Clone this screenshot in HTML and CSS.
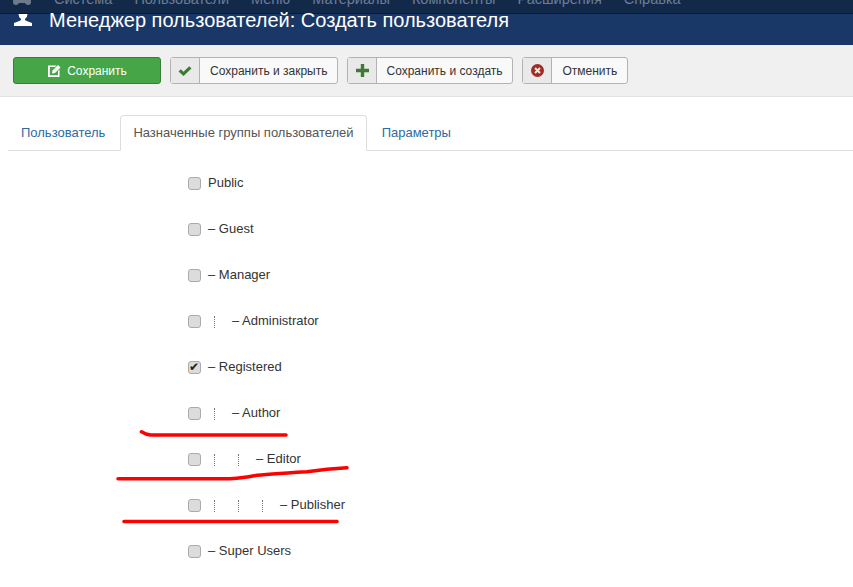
FILE: index.html
```html
<!DOCTYPE html>
<html lang="en">
<head>
    <meta charset="UTF-8">
    <meta name="viewport" content="width=device-width, initial-scale=1.0">
    <link rel="stylesheet" href="styles.css">
    <title>Менеджер пользователей: Создать пользователя</title>
</head>
<body>
    <nav class="navbar">
        <svg class="nav-logo" width="18" height="5" viewBox="0 0 18 5"><path d="M0 0h18v2q0 3-3 3-2 0-3-2H6Q5 5 3 5 0 5 0 2z" fill="#6d7a8c"/></svg>
        <a>Система</a>
        <a>Пользователи</a>
        <a>Меню</a>
        <a>Материалы</a>
        <a>Компоненты</a>
        <a>Расширения</a>
        <a>Справка</a>
    </nav>
    <header class="title-bar">
        <svg class="title-icon" width="18" height="12" viewBox="0 0 18 12"><path d="M4.500 0h9q0 3-2.500 5v1q1 1 7 3v3H0V9q6-2 7-3V5Q4.500 3 4.500 0z" fill="#fff"/></svg>
        <h1>Менеджер пользователей: Создать пользователя</h1>
    </header>
    <div class="toolbar">
        <button class="btn-save">
            <svg width="13" height="13" viewBox="0 0 13 13"><path d="M0 1.500h8.500L7 3H1.800v8.200H10V7l1.500-1.500V13H0z" fill="#fff"/><path d="M4.500 6.500 10 1l2.500 2.500L7 9 4 9.500z" fill="#fff"/></svg>
            Сохранить
        </button>
        <button class="btn-group">
            <span class="btn-icon"><svg width="14" height="12" viewBox="0 0 14 12"><path d="M0.500 6.500 2.800 4.200 5.500 6.800 11.200 1.200 13.500 3.500 5.500 11z" fill="#3d7a35"/></svg></span>
            <span class="btn-label">Сохранить и закрыть</span>
        </button>
        <button class="btn-group btn-narrow">
            <span class="btn-icon"><svg width="13" height="13" viewBox="0 0 13 13"><path d="M4.800 0h3.400v4.800H13v3.400H8.200V13H4.800V8.200H0V4.800h4.800z" fill="#3d7a35"/></svg></span>
            <span class="btn-label">Сохранить и создать</span>
        </button>
        <button class="btn-group">
            <span class="btn-icon"><svg width="13" height="13" viewBox="0 0 13 13"><circle cx="6.500" cy="6.500" r="6.500" fill="#a02c22"/><path d="M4 4l5 5M9 4l-5 5" stroke="#f3e6e4" stroke-width="2"/></svg></span>
            <span class="btn-label">Отменить</span>
        </button>
    </div>
    <div class="tabs">
        <a class="tab">Пользователь</a>
        <a class="tab active">Назначенные группы пользователей</a>
        <a class="tab">Параметры</a>
    </div>
    <ul class="groups">
        <li><input type="checkbox"><label>Public</label></li>
        <li><input type="checkbox"><label>– Guest</label></li>
        <li><input type="checkbox"><label>– Manager</label></li>
        <li><input type="checkbox"><span class="sep"></span><label>– Administrator</label></li>
        <li><input type="checkbox" checked><label>– Registered</label></li>
        <li><input type="checkbox"><span class="sep"></span><label>– Author</label></li>
        <li><input type="checkbox"><span class="sep"></span><span class="sep"></span><label>– Editor</label></li>
        <li><input type="checkbox"><span class="sep"></span><span class="sep"></span><span class="sep"></span><label>– Publisher</label></li>
        <li><input type="checkbox"><label>– Super Users</label></li>
    </ul>
    <!-- red marker strokes drawn over the list -->
    <svg class="marks" width="853" height="587" viewBox="0 0 853 587">
        <path d="M141.500 431.800q4 2.600 9 3.200H286" />
        <path d="M118 478.700H230q14-1 24-3 10-1.500 53-4 20-3 40-4" />
        <path d="M124 521.500H337" />
    </svg>
</body>
</html>
```

FILE: styles.css
```css
html, body {
    margin: 0;
    padding: 0;
}

body {
    position: relative;
    height: 587px;
    overflow: hidden;
    background-color: #fff;
    font-family: "Liberation Sans", Arial, sans-serif;
    font-size: 13px;
    color: #333;
}

.navbar {
    display: flex;
    align-items: flex-start;
    height: 13px;
    overflow: hidden;
    padding-left: 13px;
    background-color: #13294a;
    border-bottom: 1px solid #0c1a30;
    color: #6d7d94;
    font-size: 14.500px;
    line-height: 17px;
}

.nav-logo {
    flex: none;
    margin-right: 23px;
}

.navbar a {
    flex: none;
    margin-top: -9px;
    margin-right: 22px;
}

.title-bar {
    display: flex;
    align-items: flex-start;
    height: 31px;
    padding-left: 14px;
    background-color: #1a3867;
    color: #fff;
}

.title-icon {
    flex: none;
    margin-right: 17px;
}

.title-bar h1 {
    margin: 0;
    font-size: 20px;
    font-weight: normal;
    line-height: 12px;
}

.toolbar {
    display: flex;
    align-items: center;
    gap: 9px;
    height: 51px;
    padding-left: 13px;
    background-color: #f0f0f0;
    border-bottom: 1px solid #e2e2e2;
}

.toolbar button {
    height: 27px;
    padding: 0;
    font-family: inherit;
    font-size: 12px;
    border-radius: 3px;
}

.toolbar .btn-save {
    width: 148px;
    display: flex;
    align-items: center;
    justify-content: center;
    gap: 6px;
    padding-left: 1px;
    background-color: #46a546;
    border: 1px solid #378137;
    color: #fff;
}

.btn-group {
    display: flex;
    align-items: stretch;
    background-color: #f9f9f9;
    border: 1px solid #b3b3b3;
    color: #333;
}

.btn-icon {
    display: flex;
    align-items: center;
    justify-content: center;
    width: 28px;
    background-color: #e9e9e9;
    border-right: 1px solid #b3b3b3;
}

.btn-label {
    display: flex;
    align-items: center;
    padding: 0 10px;
}

.btn-narrow {
    width: 166px;
}

.btn-narrow .btn-label {
    padding: 0 0 0 9px;
    white-space: nowrap;
}

.tabs {
    display: flex;
    align-items: flex-end;
    gap: 1px;
    box-sizing: border-box;
    height: 54px;
    margin: 0 0 0 8px;
    border-bottom: 1px solid #ddd;
}

.tab {
    box-sizing: border-box;
    height: 36px;
    margin-bottom: -1px;
    padding: 0 13px 0 12px;
    line-height: 33px;
    color: #2d6ca2;
    border: 1px solid transparent;
}

.tab.active {
    padding: 0 12px;
    color: #555;
    background-color: #fff;
    border-color: #ddd #ddd #fff;
    border-radius: 4px 4px 0 0;
}

.tab.active + .tab {
    padding-left: 13px;
}

.groups {
    list-style: none;
    margin: 0;
    padding: 9px 0 0 188px;
}

.groups li {
    display: flex;
    align-items: center;
    height: 46px;
}

.groups input {
    appearance: none;
    box-sizing: border-box;
    position: relative;
    flex: none;
    width: 13px;
    height: 13px;
    margin: 1px 7px 0 0;
    background-color: #dcdcdc;
    border: 1px solid #ababab;
    border-radius: 3px;
}

.groups input:checked::after {
    content: "✔";
    position: absolute;
    left: 0;
    top: 0;
    font-size: 12px;
    line-height: 11px;
    color: #222;
}

.groups label {
    position: relative;
    top: -1px;
}

.sep {
    flex: none;
    box-sizing: border-box;
    width: 1px;
    height: 12px;
    margin: 1px 17px 0 6px;
    border-left: 1px dotted #777;
}

.marks {
    position: absolute;
    left: 0;
    top: 0;
    pointer-events: none;
}

.marks path {
    fill: none;
    stroke: #f00;
    stroke-width: 3.500;
    stroke-linecap: round;
}
```
